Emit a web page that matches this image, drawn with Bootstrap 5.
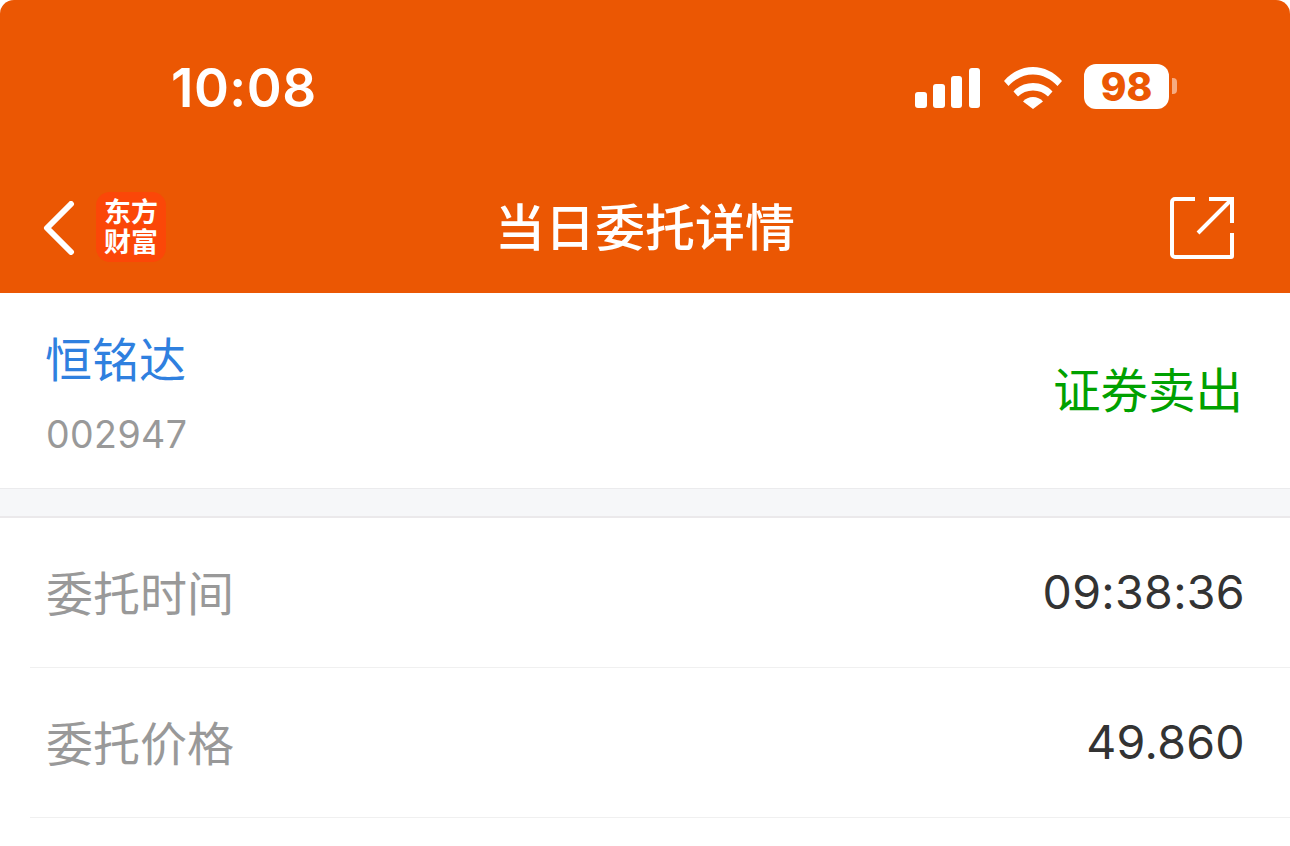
<!DOCTYPE html>
<html lang="zh-CN">
<head>
    <meta charset="UTF-8">
    <title>当日委托详情</title>
    <link href="https://cdn.jsdelivr.net/npm/bootstrap@5.3.0/dist/css/bootstrap.min.css" rel="stylesheet">
    <style>
        html, body { height: 846px; overflow: hidden; background: #fff; }
        body { font-family: Inter, "Noto Sans CJK SC", sans-serif; }
        .app-top { background: #eb5703; height: 293px; border-radius: 14px 14px 0 0; color: #fff; }
        .status-row { height: 176px; padding: 0 113px 0 171px; }
        .clock { font-size: 53px; font-weight: 600; line-height: 1; letter-spacing: .5px; }
        .batt { width: 85px; height: 45px; background: #fff; border-radius: 12px; color: #eb5703; font-size: 39px; font-weight: 800; line-height: 45px; text-align: center; margin-bottom: 4px; }
        .batt-tip { width: 5px; height: 16px; background: #f6ab81; border-radius: 0 4px 4px 0; margin-left: 3px; margin-bottom: 4px; }
        .signal-icon { margin-right: 23px; }
        .wifi-icon { margin-right: 22px; }
        .nav-row { height: 117px; padding: 0 56px 14px 43px; position: relative; }
        .page-title { position: absolute; left: 0; right: 0; top: 22px; text-align: center; font-size: 50px; font-weight: 500; line-height: 1.2; margin: 0; }
        .brand-logo { width: 70px; height: 70px; background: #fb4708; border-radius: 14px; margin-left: 21px; margin-bottom: 2px; font-family: "Noto Sans CJK SC", sans-serif; font-weight: 700; font-size: 27px; line-height: 30px; text-align: center; padding-top: 4px; }
        .stock-row { height: 196px; padding: 0 47px 0 45px; border-bottom: 1px solid #ebebed; }
        .stock-name { color: #2f80df; font-size: 47px; line-height: 1.2; margin-top: 39px; }
        .stock-code { color: #999; font-size: 37.500px; line-height: 1.2; margin-top: 24px; margin-left: 1px; font-weight: 400; letter-spacing: .4px; }
        .side-label { color: #00a100; font-size: 47.500px; line-height: 1.2; }
        .gap-band { height: 29px; background: #f6f7f9; border-bottom: 2px solid #ebe9eb; }
        .info-row { height: 150px; margin-left: 30px; padding: 0 45px 0 16px; border-bottom: 1px solid #f0f0f0; font-size: 47px; }
        .info-key { color: #999; padding-top: 4px; }
        .info-val { color: #333; font-size: 46.500px; letter-spacing: .3px; }
    </style>
</head>
<body>
<div class="app-top">
    <div class="status-row d-flex align-items-center justify-content-between">
        <div class="clock">10:08</div>
        <div class="d-flex align-items-center">
            <svg width="66" height="42" viewBox="0 0 66 42" fill="#fff" class="signal-icon">
                <rect x="0" y="25" width="12" height="16" rx="3"/>
                <rect x="18" y="17" width="12" height="24" rx="3"/>
                <rect x="36" y="9" width="11" height="32" rx="3"/>
                <rect x="54" y="1" width="11" height="40" rx="3"/>
            </svg>
            <svg width="58" height="42" viewBox="0 0 58 42" fill="#fff" class="wifi-icon">
                <path d="M0 14C8 5 18 0 29 0s21 5 29 14l-4.500 5C47 12 38.500 7.500 29 7.500S11 12 4.500 19Z"/>
                <path d="M9.500 24.500C14.500 19 21.500 16 29 16s14.500 3 19.500 8.500L44 29.500C40 25.500 35 23.500 29 23.500s-11 2-15 6Z"/>
                <path d="M19 34.500c2.500-3 6-4.500 10-4.500s7.500 1.500 10 4.500L29 42Z"/>
            </svg>
            <div class="batt">98</div>
            <div class="batt-tip"></div>
        </div>
    </div>
    <div class="nav-row d-flex align-items-center justify-content-between">
        <h1 class="page-title">当日委托详情</h1>
        <div class="d-flex align-items-center">
            <svg width="32" height="54" viewBox="0 0 32 54" fill="none" stroke="#fff" stroke-width="6" stroke-linecap="round" stroke-linejoin="round">
                <path d="M28 3 4 27l24 24"/>
            </svg>
            <div class="brand-logo">东方<br>财富</div>
        </div>
        <svg width="64" height="64" viewBox="0 0 64 64" fill="none" stroke="#fff" stroke-width="4">
            <path d="M25 3H5a3 3 0 0 0-3 3v52a3 3 0 0 0 3 3h56a1 1 0 0 0 1-1V37"/>
            <path d="M39 3h23v24M62 3 28 37"/>
        </svg>
    </div>
</div>
<div class="stock-row d-flex align-items-center justify-content-between">
    <div class="align-self-start">
        <div class="stock-name">恒铭达</div>
        <div class="stock-code">002947</div>
    </div>
    <div class="side-label">证券卖出</div>
</div>
<div class="gap-band"></div>
<div class="info-row d-flex align-items-center justify-content-between">
    <span class="info-key">委托时间</span>
    <span class="info-val">09:38:36</span>
</div>
<div class="info-row d-flex align-items-center justify-content-between">
    <span class="info-key">委托价格</span>
    <span class="info-val">49.860</span>
</div>
<script src="https://cdn.jsdelivr.net/npm/bootstrap@5.3.0/dist/js/bootstrap.bundle.min.js"></script>
</body>
</html>
